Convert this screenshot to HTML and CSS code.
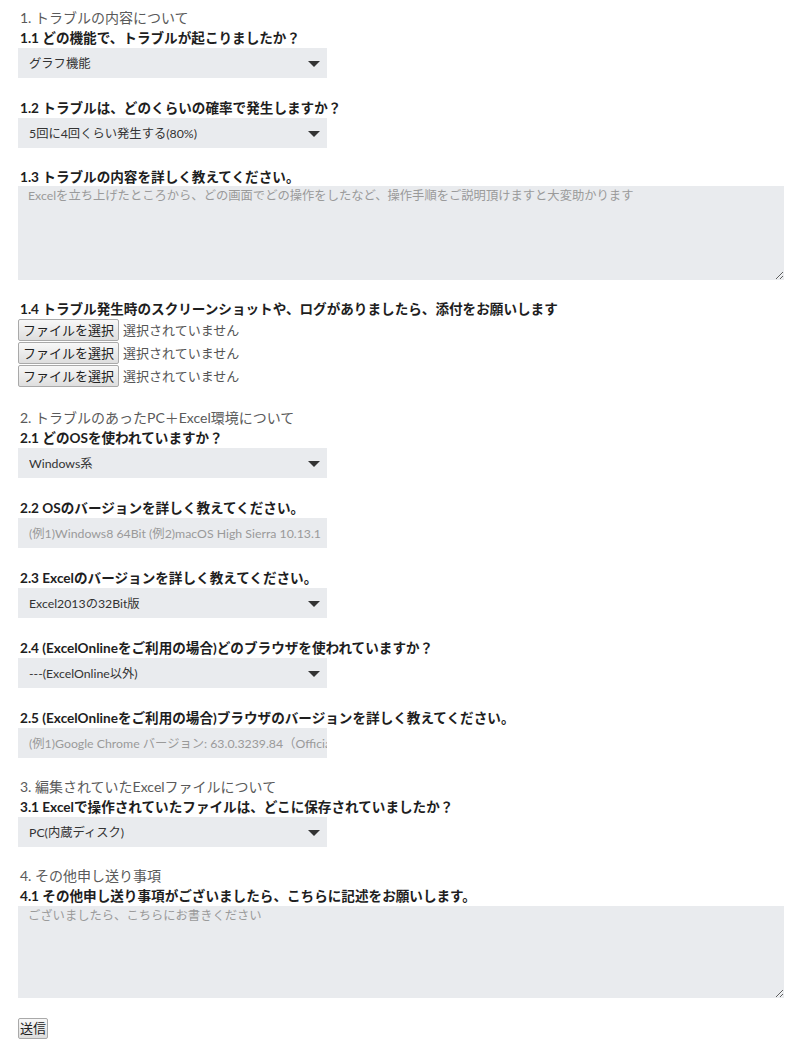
FILE: index.html
```html
<!DOCTYPE html>
<html lang="ja">
<head>
<meta charset="utf-8">
<title>トラブル報告フォーム</title>
<link rel="stylesheet" href="styles.css">
</head>
<body>
<form class="form">
  <section class="section">
    <div class="sec-title">1. トラブルの内容について</div>
    <div class="field">
      <label class="label">1.1 どの機能で、トラブルが起こりましたか？</label>
      <div class="select-wrap">
        <select class="select"><option>グラフ機能</option></select>
        <svg class="arrow" width="12" height="6" viewBox="0 0 12 6"><path d="M0 0H12L6 6Z" fill="#333"/></svg>
      </div>
    </div>
    <div class="field">
      <label class="label">1.2 トラブルは、どのくらいの確率で発生しますか？</label>
      <div class="select-wrap">
        <select class="select"><option>5回に4回くらい発生する(80%)</option></select>
        <svg class="arrow" width="12" height="6" viewBox="0 0 12 6"><path d="M0 0H12L6 6Z" fill="#333"/></svg>
      </div>
    </div>
    <div class="field">
      <label class="label tight">1.3 トラブルの内容を詳しく教えてください。</label>
      <textarea class="textarea tall" placeholder="Excelを立ち上げたところから、どの画面でどの操作をしたなど、操作手順をご説明頂けますと大変助かります"></textarea>
    </div>
    <div class="field files">
      <label class="label tight">1.4 トラブル発生時のスクリーンショットや、ログがありましたら、添付をお願いします</label>
      <div class="file-row"><button type="button" class="file-btn">ファイルを選択</button><span class="file-name">選択されていません</span></div>
      <div class="file-row"><button type="button" class="file-btn">ファイルを選択</button><span class="file-name">選択されていません</span></div>
      <div class="file-row"><button type="button" class="file-btn">ファイルを選択</button><span class="file-name">選択されていません</span></div>
    </div>
  </section>

  <section class="section">
    <div class="sec-title">2. トラブルのあったPC＋Excel環境について</div>
    <div class="field">
      <label class="label">2.1 どのOSを使われていますか？</label>
      <div class="select-wrap">
        <select class="select"><option>Windows系</option></select>
        <svg class="arrow" width="12" height="6" viewBox="0 0 12 6"><path d="M0 0H12L6 6Z" fill="#333"/></svg>
      </div>
    </div>
    <div class="field">
      <label class="label">2.2 OSのバージョンを詳しく教えてください。</label>
      <input class="input" type="text" placeholder="(例1)Windows8 64Bit (例2)macOS High Sierra 10.13.1">
    </div>
    <div class="field">
      <label class="label">2.3 Excelのバージョンを詳しく教えてください。</label>
      <div class="select-wrap">
        <select class="select"><option>Excel2013の32Bit版</option></select>
        <svg class="arrow" width="12" height="6" viewBox="0 0 12 6"><path d="M0 0H12L6 6Z" fill="#333"/></svg>
      </div>
    </div>
    <div class="field">
      <label class="label">2.4 (ExcelOnlineをご利用の場合)どのブラウザを使われていますか？</label>
      <div class="select-wrap">
        <select class="select"><option>---(ExcelOnline以外)</option></select>
        <svg class="arrow" width="12" height="6" viewBox="0 0 12 6"><path d="M0 0H12L6 6Z" fill="#333"/></svg>
      </div>
    </div>
    <div class="field">
      <label class="label">2.5 (ExcelOnlineをご利用の場合)ブラウザのバージョンを詳しく教えてください。</label>
      <input class="input" type="text" placeholder="(例1)Google Chrome バージョン: 63.0.3239.84（Official Build）">
    </div>
  </section>

  <section class="section">
    <div class="sec-title">3. 編集されていたExcelファイルについて</div>
    <div class="field">
      <label class="label">3.1 Excelで操作されていたファイルは、どこに保存されていましたか？</label>
      <div class="select-wrap">
        <select class="select"><option>PC(内蔵ディスク)</option></select>
        <svg class="arrow" width="12" height="6" viewBox="0 0 12 6"><path d="M0 0H12L6 6Z" fill="#333"/></svg>
      </div>
    </div>
  </section>

  <section class="section">
    <div class="sec-title">4. その他申し送り事項</div>
    <div class="field">
      <label class="label">4.1 その他申し送り事項がございましたら、こちらに記述をお願いします。</label>
      <textarea class="textarea" placeholder="ございましたら、こちらにお書きください"></textarea>
    </div>
  </section>

  <div class="actions"><button type="button" class="submit">送信</button></div>
</form>
</body>
</html>
```
FILE: styles.css
```css
html, body {
  margin: 0;
  padding: 0;
  background: #fff;
}
body {
  font-family: Lato, "Noto Sans CJK JP", sans-serif;
  color: #222;
}
.form {
  padding: 8px 16px 0 18px;
  display: flex;
  flex-direction: column;
}
.section {
  display: flex;
  flex-direction: column;
  margin-bottom: 19px;
}
.sec-title {
  font-size: 14px;
  line-height: 20px;
  color: #5a5a5a;
  margin-left: 2px;
}
.field {
  display: flex;
  flex-direction: column;
  margin-bottom: 20px;
}
.field:last-child { margin-bottom: 0; }
.field.files:last-child { margin-bottom: 2px; }
.label {
  font-size: 13.6px;
  line-height: 20px;
  font-weight: 700;
  color: #1e1e1e;
  margin-left: 2px;
  white-space: nowrap;
}
.label.tight {
  line-height: 18px;
}
.select-wrap {
  position: relative;
  width: 309px;
  height: 30px;
}
.select {
  appearance: none;
  -webkit-appearance: none;
  width: 100%;
  height: 30px;
  border: none;
  border-radius: 0;
  background: #e9ebee;
  font-family: Lato, "Noto Sans CJK JP", sans-serif;
  font-size: 12.3px;
  color: #333;
  padding: 0 0 0 11px;
  margin: 0;
  outline: none;
}
.arrow {
  position: absolute;
  right: 7px;
  top: 13px;
  pointer-events: none;
}
.input {
  width: 309px;
  height: 30px;
  box-sizing: border-box;
  border: none;
  background: #e9ebee;
  font-family: Lato, "Noto Sans CJK JP", sans-serif;
  font-size: 12.3px;
  color: #333;
  padding: 0 0 0 11px;
  margin: 0;
  outline: none;
}
.input::placeholder, .textarea::placeholder {
  color: #9a9a9a;
}
.textarea {
  width: 766px;
  height: 92px;
  box-sizing: border-box;
  border: none;
  background: #e9ebee;
  font-family: Lato, "Noto Sans CJK JP", sans-serif;
  font-size: 12.3px;
  line-height: 18px;
  color: #333;
  padding: 1px 10px;
  margin: 0;
  resize: vertical;
  outline: none;
  display: block;
}
.textarea.tall { height: 94px; }
.file-row {
  display: flex;
  align-items: center;
  height: 23px;
}
.file-btn {
  font-family: "Noto Sans CJK JP", sans-serif;
  font-size: 13px;
  line-height: 18px;
  height: 22px;
  padding: 0 4px;
  margin: 0;
  border: 1px solid #a9a9a9;
  border-radius: 2px;
  background: linear-gradient(#f8f8f8, #dedede);
  color: #222;
  white-space: nowrap;
}
.file-name {
  font-family: "Noto Sans CJK JP", sans-serif;
  font-size: 13px;
  color: #555;
  margin-left: 4px;
  white-space: nowrap;
}
.actions {
  margin-top: 0;
}
.submit {
  font-family: "Noto Sans CJK JP", sans-serif;
  font-size: 13px;
  line-height: 16px;
  height: 21px;
  padding: 0 1px;
  border: 1px solid #a9a9a9;
  border-radius: 2px;
  background: linear-gradient(#f8f8f8, #dedede);
  color: #222;
}
```
